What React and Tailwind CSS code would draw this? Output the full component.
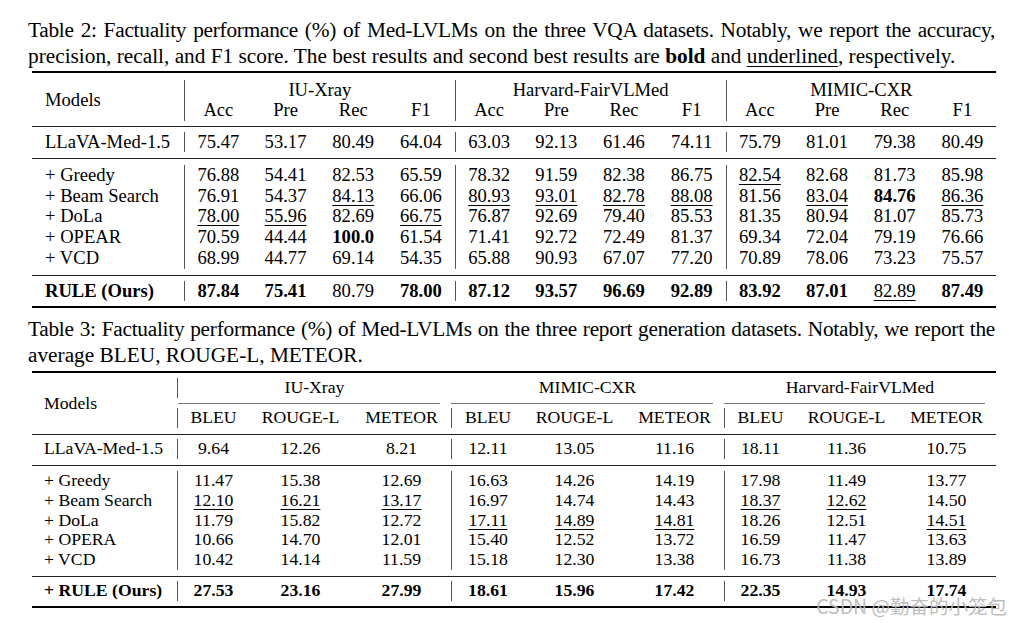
import React from "react";

// values: "*" prefix = bold, "_" prefix = underlined
const t2Rows = [
  ["+ Greedy", ["76.88", "54.41", "82.53", "65.59", "78.32", "91.59", "82.38", "86.75", "_82.54", "82.68", "81.73", "85.98"]],
  ["+ Beam Search", ["76.91", "54.37", "_84.13", "66.06", "_80.93", "_93.01", "_82.78", "_88.08", "81.56", "_83.04", "*84.76", "_86.36"]],
  ["+ DoLa", ["_78.00", "_55.96", "82.69", "_66.75", "76.87", "92.69", "79.40", "85.53", "81.35", "80.94", "81.07", "85.73"]],
  ["+ OPEAR", ["70.59", "44.44", "*100.0", "61.54", "71.41", "92.72", "72.49", "81.37", "69.34", "72.04", "79.19", "76.66"]],
  ["+ VCD", ["68.99", "44.77", "69.14", "54.35", "65.88", "90.93", "67.07", "77.20", "70.89", "78.06", "73.23", "75.57"]],
];

const t3Rows = [
  ["+ Greedy", ["11.47", "15.38", "12.69", "16.63", "14.26", "14.19", "17.98", "11.49", "13.77"]],
  ["+ Beam Search", ["_12.10", "_16.21", "_13.17", "16.97", "14.74", "14.43", "_18.37", "_12.62", "14.50"]],
  ["+ DoLa", ["11.79", "15.82", "12.72", "_17.11", "_14.89", "_14.81", "18.26", "12.51", "_14.51"]],
  ["+ OPERA", ["10.66", "14.70", "12.01", "15.40", "12.52", "13.72", "16.59", "11.47", "13.63"]],
  ["+ VCD", ["10.42", "14.14", "11.59", "15.18", "12.30", "13.38", "16.73", "11.38", "13.89"]],
];

function Val({ v }) {
  if (v.startsWith("*")) return <span className="font-bold">{v.slice(1)}</span>;
  if (v.startsWith("_"))
    return <span className="underline decoration-1 underline-offset-[3px]">{v.slice(1)}</span>;
  return <span>{v}</span>;
}

function Row2({ name, vals, bold }) {
  return (
    <div className="grid h-[20.75px] grid-cols-[152px_repeat(12,67.7px)] leading-[20.75px]">
      <div className={bold ? "pl-[13px] font-bold" : "pl-[13px]"}>{name}</div>
      {vals.map((v, i) => (
        <div key={i} className={i % 4 === 0 ? "border-l border-[#555] text-center" : "text-center"}>
          <Val v={v} />
        </div>
      ))}
    </div>
  );
}

function Row3({ name, vals, bold }) {
  return (
    <div className="grid h-[19.8px] grid-cols-[145px_72px_103px_99px_73px_101px_99px_72px_101px_99px] leading-[19.8px]">
      <div className={bold ? "pl-[12px] font-bold" : "pl-[12px]"}>{name}</div>
      {vals.map((v, i) => (
        <div key={i} className={i % 3 === 0 ? "border-l border-[#555] text-center" : "text-center"}>
          <Val v={v} />
        </div>
      ))}
    </div>
  );
}

function TopRule() {
  return <div className="h-[2px] bg-black" />;
}

function MidRule() {
  return <div className="h-px bg-[#222]" />;
}

export default function App() {
  return (
    <div className="relative h-[623px] w-[1009px] overflow-hidden bg-white font-['Liberation_Serif','Times_New_Roman',serif] text-black">
      {/* Table 2 caption */}
      <div className="ml-[28px] w-[967px] pt-[17px] text-[21.3px] leading-[26px]">
        <div className="whitespace-nowrap tracking-[-0.25px] [text-align-last:justify]">
          Table 2: Factuality performance (%) of Med-LVLMs on the three VQA datasets. Notably, we report the accuracy,
        </div>
        <div className="whitespace-nowrap">
          precision, recall, and F1 score. The best results and second best results are{" "}
          <span className="font-bold">bold</span> and{" "}
          <span className="underline decoration-1 underline-offset-[3px]">underlined</span>, respectively.
        </div>
      </div>

      {/* Table 2 */}
      <div className="ml-[32px] mt-[2px] w-[964px] text-[18.6px]">
        <TopRule />
        <div className="pb-[5px] pt-[6.5px]">
          <div className="grid grid-cols-[152px_repeat(12,67.7px)] grid-rows-[20.75px_20.75px] leading-[20.75px]">
            <div className="row-span-2 flex items-center pl-[13px]">Models</div>
            <div className="col-span-4 border-l border-[#555] text-center">IU-Xray</div>
            <div className="col-span-4 border-l border-[#555] text-center">Harvard-FairVLMed</div>
            <div className="col-span-4 border-l border-[#555] text-center">MIMIC-CXR</div>
            {[0, 1, 2].map((g) =>
              ["Acc", "Pre", "Rec", "F1"].map((h, i) => (
                <div key={g + h} className={i === 0 ? "border-l border-[#555] text-center" : "text-center"}>
                  {h}
                </div>
              ))
            )}
          </div>
        </div>
        <MidRule />
        <div className="pb-[6px] pt-[4.5px]">
          <Row2
            name="LLaVA-Med-1.5"
            vals={["75.47", "53.17", "80.49", "64.04", "63.03", "92.13", "61.46", "74.11", "75.79", "81.01", "79.38", "80.49"]}
          />
        </div>
        <MidRule />
        <div className="pb-[6px] pt-[5.5px]">
          {t2Rows.map(([n, v]) => (
            <Row2 key={n} name={n} vals={v} />
          ))}
        </div>
        <MidRule />
        <div className="pb-[5px] pt-[5px]">
          <Row2
            name="RULE (Ours)"
            bold
            vals={["*87.84", "*75.41", "80.79", "*78.00", "*87.12", "*93.57", "*96.69", "*92.89", "*83.92", "*87.01", "_82.89", "*87.49"]}
          />
        </div>
        <TopRule />
      </div>

      {/* Table 3 caption */}
      <div className="ml-[28px] mt-[8px] w-[967px] text-[21.3px] leading-[26px]">
        <div className="whitespace-nowrap tracking-[-0.25px] [text-align-last:justify]">
          Table 3: Factuality performance (%) of Med-LVLMs on the three report generation datasets. Notably, we report the
        </div>
        <div>average BLEU, ROUGE-L, METEOR.</div>
      </div>

      {/* Table 3 */}
      <div className="ml-[32px] mt-[3px] w-[964px] text-[17.7px]">
        <TopRule />
        <div className="flex pb-[6px] pt-[5px]">
          <div className="flex w-[145px] items-center pl-[12px]">Models</div>
          <div className="w-[819px]">
            <div className="grid h-[19.8px] grid-cols-[274px_273px_272px] leading-[19.8px]">
              <div className="border-l border-[#555] text-center">IU-Xray</div>
              <div className="text-center">MIMIC-CXR</div>
              <div className="text-center">Harvard-FairVLMed</div>
            </div>
            <div className="mt-[5px] grid grid-cols-[274px_273px_272px]">
              <div className="ml-[1px] mr-[11px] h-px bg-[#777]" />
              <div className="mr-[11px] h-px bg-[#777]" />
              <div className="mr-[11px] h-px bg-[#777]" />
            </div>
            <div className="mt-[4.3px] grid h-[19.8px] grid-cols-[72px_103px_99px_73px_101px_99px_72px_101px_99px] leading-[19.8px]">
              {[0, 1, 2].map((g) =>
                ["BLEU", "ROUGE-L", "METEOR"].map((h, i) => (
                  <div key={g + h} className={i === 0 ? "border-l border-[#555] text-center" : "text-center"}>
                    {h}
                  </div>
                ))
              )}
            </div>
          </div>
        </div>
        <MidRule />
        <div className="pb-[6px] pt-[4px]">
          <Row3
            name="LLaVA-Med-1.5"
            vals={["9.64", "12.26", "8.21", "12.11", "13.05", "11.16", "18.11", "11.36", "10.75"]}
          />
        </div>
        <MidRule />
        <div className="pb-[6px] pt-[5px]">
          {t3Rows.map(([n, v]) => (
            <Row3 key={n} name={n} vals={v} />
          ))}
        </div>
        <MidRule />
        <div className="pb-[5px] pt-[4.4px]">
          <Row3
            name="+ RULE (Ours)"
            bold
            vals={["*27.53", "*23.16", "*27.99", "*18.61", "*15.96", "*17.42", "*22.35", "*14.93", "*17.74"]}
          />
        </div>
        <TopRule />
      </div>

      {/* watermark */}
      <div className="absolute bottom-[6px] right-[2px] font-['Noto_Sans_CJK_SC',sans-serif] text-[19.5px] leading-[22px] text-[#b8b8b8] opacity-90">
        CSDN @勤奋的小笼包
      </div>
    </div>
  );
}
